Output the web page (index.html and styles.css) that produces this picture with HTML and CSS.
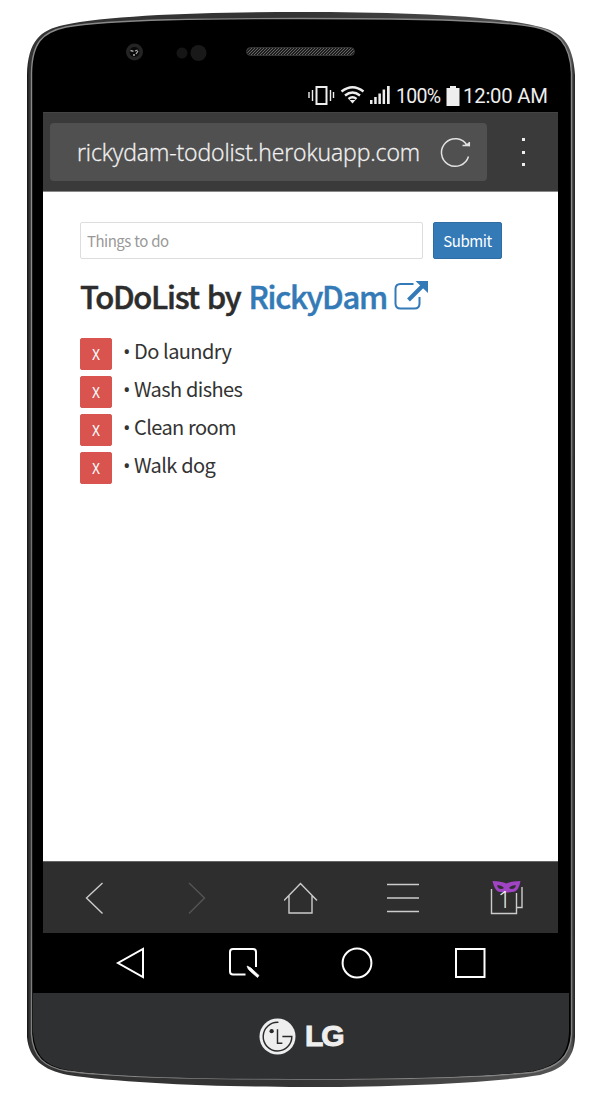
FILE: index.html
```html
<!DOCTYPE html>
<html lang="en">
<head>
<meta charset="utf-8">
<meta name="viewport" content="width=device-width">
<title>ToDoList</title>
<link rel="stylesheet" href="styles.css">
</head>
<body>
<div class="device">
  <svg class="shell" viewBox="0 0 596 1100" aria-hidden="true">
    <defs>
      <linearGradient id="rim" x1="27" x2="575" y1="0" y2="0" gradientUnits="userSpaceOnUse">
        <stop offset="0" stop-color="#111"/><stop offset=".004" stop-color="#333"/><stop offset=".5" stop-color="#343434"/><stop offset=".993" stop-color="#555"/><stop offset="1" stop-color="#222"/>
      </linearGradient>
      <linearGradient id="edge" x1="0" x2="0" y1="15" y2="1085" gradientUnits="userSpaceOnUse">
        <stop offset="0" stop-color="#888"/><stop offset=".25" stop-color="#8c8c8c"/><stop offset=".6" stop-color="#666"/><stop offset="1" stop-color="#858585"/>
      </linearGradient>
      <pattern id="mesh" width="3" height="3" patternUnits="userSpaceOnUse">
        <rect width="3" height="3" fill="#1c1c1c"/><path d="M0 3L3 0" stroke="#777" stroke-width=".8"/>
      </pattern>
      <clipPath id="face"><path d="M33 72C34 42 44 33 67 28C112 20 215 19 300 19C385 19 489 20 534 28C557 33 568 43 569 72V1032C568 1057 556 1066 533 1071C482 1078 380 1079 300 1079C220 1079 119 1078 68 1070C45 1066 35 1056 33 1032Z"/></clipPath>
    </defs>
    <path fill="url(#rim)" d="M27 75C28 41 40 30 64 25C110 15 210 12 301 12C392 12 488 15 536 26C561 31 573 42 575 75V1037C574 1059 563 1069 540 1075C485 1084 380 1087 301 1087C222 1087 120 1083 68 1075C43 1070 29 1059 27 1037Z"/>
    <path fill="#000" stroke="url(#edge)" stroke-width="1.4" d="M31.500 73C32 42 43 32 66 27C112 19 215 18.500 300 18.500C386 18.500 489 19 535 27C558 32 570 43 571.500 73V1034C570 1058 557 1067 534 1072C482 1078 380 1079 300 1079C220 1079 119 1078 67 1071C44 1067 33 1057 31.500 1034Z"/>
    <rect x="30" y="993" width="542" height="92" fill="#2f3032" clip-path="url(#face)"/>
    <circle cx="134.500" cy="52" r="8.500" fill="#242424"/><circle cx="134.500" cy="52" r="5" fill="#090909"/>
    <path d="M130.500 50.500l3 .8M135 51l2.500-1M136 54l2-3M133 55h2" stroke="#aaa" stroke-width="1.300"/>
    <circle cx="182" cy="53" r="5.500" fill="#151515"/><circle cx="198.500" cy="53" r="8" fill="#191919"/>
    <rect x="246.500" y="47.500" width="108" height="8" rx="4" fill="url(#mesh)" stroke="#333"/>
  </svg>
  <main class="screen">
    <header class="status">
      <svg class="status-icons" viewBox="0 0 84 22" aria-hidden="true">
        <path d="M8.500 2h10v17h-10z" fill="none" stroke="#eee" stroke-width="2"/>
        <path d="M1 7v6M4.500 5v11M22.500 5v11M25.500 7v6" stroke="#eee" stroke-width="1.400"/>
        <g fill="none" stroke="#eee" stroke-width="2.400"><path d="M33.500 6.500q11-8.500 22 0M37 10.500q7.500-6 15 0M40.500 14q4-3.500 8 0"/></g>
        <path d="M41.500 15h6l-3 3.500z" fill="#eee"/>
        <path d="M62 19v-4h2.500v4zM66.200 19v-7h2.500v7zM70.400 19V8.500h2.500V19zM74.600 19V4.500h2.500V19zM79 19V1h2.700v18z" fill="#eee"/>
      </svg>
      <span class="percent">100%</span>
      <svg class="battery" viewBox="0 0 14 20" aria-hidden="true"><path d="M4 0h6v2h3.500v18H.5V2H4z" fill="#eee"/></svg>
      <time class="clock">12:00 AM</time>
    </header>
    <nav class="browser">
      <div class="address"><span class="url">rickydam-todolist.herokuapp.com</span>
        <svg class="reload" viewBox="0 0 32 32" fill="none" stroke="#e2e2e2" stroke-width="1.500" aria-hidden="true"><path d="M28.500 20.500A13.800 13.800 0 1 1 27.200 9.500M22.500 9.500h6.800V6"/><path d="M25 8.500l4.500-2v4z" fill="#e2e2e2" stroke="none"/></svg>
      </div>
      <div class="dots"><i></i><i></i><i></i></div>
    </nav>
    <section class="page">
      <form class="entry"><input class="field" type="text" placeholder="Things to do" aria-label="Things to do"><button class="submit" type="button">Submit</button></form>
      <h1 class="title"><span>ToDoList by <a class="author">RickyDam</a></span>
        <svg class="external" viewBox="0 0 34 32" fill="none" aria-hidden="true"><path d="M19.500 4H6.500Q1.500 4 1.500 9v14.500q0 5 5 5h14q5 0 5-5V17" stroke="#337ab7" stroke-width="2"/><path d="M14.500 20L29 5.500" stroke="#337ab7" stroke-width="4"/><path d="M21.500 1H34v12z" fill="#337ab7"/></svg>
      </h1>
      <ul class="todos">
        <li class="todo"><button class="remove">X</button><span class="task"><b class="bullet">•</b> Do laundry</span></li>
        <li class="todo"><button class="remove">X</button><span class="task"><b class="bullet">•</b> Wash dishes</span></li>
        <li class="todo"><button class="remove">X</button><span class="task"><b class="bullet">•</b> Clean room</span></li>
        <li class="todo"><button class="remove">X</button><span class="task"><b class="bullet">•</b> Walk dog</span></li>
      </ul>
    </section>
    <nav class="toolbar">
      <svg viewBox="0 0 34 36"><path d="M25.500 3L9.500 18l16 15.500"/></svg>
      <svg class="disabled" viewBox="0 0 34 36"><path d="M9 3l15.500 15L9 33.500"/></svg>
      <svg viewBox="0 0 34 36"><path d="M0 20.500L16.500 3.500l16.500 17M5 16v17h23V16"/></svg>
      <svg viewBox="0 0 34 36"><path d="M0 4.500h32M0 18h32M0 31.500h32" stroke-width="1.700"/></svg>
      <div class="tabs"><svg viewBox="0 0 34 36"><path d="M1.500 9v24.500h25V13M32 7v20.500h-5"/><path fill="#a044c4" stroke="none" fill-rule="evenodd" d="M2.500 1C8 1 13 2 16.500 3.500C20 2 25 1 30.500 1C29 8 27 12 22.500 12C21 12 20 12.500 16.500 12.500C13 12.500 12 12 10.500 12C6 12 4 7 2.500 1ZM7 5.500C8 9.500 12 9.500 14 8C12 6 10 5 7 5.500ZM26 5.500C25 9.500 21 9.500 19 8C21 6 23 5 26 5.500Z"/></svg><span class="count">1</span></div>
    </nav>
    <nav class="system">
      <svg viewBox="0 0 34 34"><path d="M29 3v28L4 17z"/></svg>
      <svg viewBox="0 0 34 34"><path d="M18.500 28.500H6Q3 28.500 3 25.500V6Q3 3 6 3h20q3 0 3 3v15"/><path d="M20 20q5 2 6 4l6 5.500-1.500 2-7-6Q21 24 20 20Z" fill="#fff" stroke-width=".7"/></svg>
      <svg viewBox="0 0 34 34"><circle cx="17" cy="17" r="14.400"/></svg>
      <svg viewBox="0 0 34 34"><path d="M3 3h28.500v28H3z"/></svg>
    </nav>
  </main>
  <footer class="brand">
    <svg class="emblem" viewBox="0 0 38 38" aria-hidden="true"><circle cx="19" cy="19" r="18.500" fill="#eee"/><g fill="none" stroke="#292a2c" stroke-width="1.500"><path d="M20 4.500A14.700 14.700 0 1 0 33.700 19H24"/><path d="M19 11.500v14.500h5"/></g><circle cx="13" cy="13.500" r="2.200" fill="#292a2c"/></svg>
    <span class="wordmark">LG</span>
  </footer>
</div>
</body>
</html>
```
FILE: styles.css
```css
* { box-sizing: border-box; }
body { margin: 0; background: #fff; overflow: hidden; }
.device { position: relative; width: 596px; height: 1100px; padding: 80px 38px 0 43px; }
.shell { position: absolute; inset: 0; width: 596px; height: 1100px; }
.screen { position: relative; width: 515px; }

.status { display: flex; align-items: center; height: 32px; padding-left: 265px; color: #eee; font-family: Roboto, sans-serif; font-size: 20.300px; line-height: 32px; white-space: nowrap; }
.status-icons { flex: none; width: 84px; height: 22px; margin-top: -1px; }
.percent { width: 50px; margin-left: 4px; padding-top: 1px; font-size: 19.500px; letter-spacing: -.7px; }
.battery { flex: none; width: 14px; height: 20px; margin: -1px 3px 0 0; }
.clock { letter-spacing: -.2px; }

.browser { display: flex; height: 80px; padding: 10px 0 11px 7px; background: #3a3a3a; border-top: 1px solid #444; border-bottom: 1px solid #888; }
.address { display: flex; flex: none; align-items: center; width: 437px; height: 58px; padding-left: 27px; border-radius: 4px; background: #505050; }
.url { width: 363px; color: #f3f3f3; font: 300 23px/32px "Open Sans", sans-serif; letter-spacing: -.1px; -webkit-text-stroke: .3px #f3f3f3; white-space: nowrap; }
.reload { flex: none; width: 32px; height: 32px; }
.dots { display: flex; flex: none; flex-direction: column; align-items: center; justify-content: space-between; width: 71px; height: 28px; margin-top: 15px; }
.dots i { width: 3px; height: 3px; margin-left: 1px; background: #eee; }

.page { height: 669px; padding: 30px 37px 0; background: #fff; color: #333; font-family: "Noto Sans CJK SC", sans-serif; }
.entry { display: flex; gap: 10px; }
.field { width: 343px; height: 37px; padding: 0 6px 1px; border: 1px solid #ddd; border-radius: 2px; background: #fff; font: 15px/22px "Noto Sans CJK SC", sans-serif; letter-spacing: -.5px; word-spacing: .6px; }
.field::placeholder { color: #999; opacity: 1; }
.submit { width: 69px; height: 37px; padding: 0; border: 1px solid #2e6da4; border-radius: 2px; background: #337ab7; color: #fff; font: 15px/22px "Noto Sans CJK SC", sans-serif; letter-spacing: -.4px; }
.title { display: flex; align-items: center; gap: 8px; height: 48px; margin: 14px 0 17px; color: #2d2d2d; font-size: 31px; font-weight: 500; line-height: 48px; letter-spacing: -1.300px; word-spacing: 2.500px; -webkit-text-stroke: .5px currentColor; white-space: nowrap; }
.title > span { width: 306px; margin-top: -3px; }
.author { color: #337ab7; }
.external { width: 34px; height: 32px; margin-top: -3px; }
.todos { display: flex; flex-direction: column; gap: 6px; margin: 0; padding: 0; list-style: none; }
.todo { display: flex; align-items: center; gap: 11px; height: 32px; font-size: 20px; line-height: 30px; letter-spacing: -.6px; word-spacing: .5px; white-space: nowrap; }
.task { display: flex; gap: 4px; margin-top: -4px; }
.bullet { width: 7px; font: 20px/32px "Open Sans", sans-serif; }
.remove { width: 32px; height: 32px; padding: 0; border: 1px solid #d9534f; border-radius: 2px; background: #d9534f; color: #fff; font: 14px/20px "Noto Sans CJK SC", sans-serif; }

.toolbar { display: flex; align-items: center; justify-content: space-between; height: 72px; padding: 0 34px; border-top: 1px solid #666; background: #2e2e2e; }
.toolbar svg { display: block; width: 34px; height: 36px; fill: none; stroke: #ccc; stroke-width: 1.400; }
.toolbar .disabled { stroke: #555; }
.tabs { position: relative; width: 34px; height: 36px; }
.count { position: absolute; left: 0; top: 5px; width: 29px; color: #fff; font: 300 23px/28px "Open Sans", sans-serif; text-align: center; }
.system { display: flex; align-items: center; justify-content: space-between; height: 60px; padding: 0 71px; background: #000; }
.system svg { width: 34px; height: 34px; fill: none; stroke: #fff; stroke-width: 2; }

.brand { position: relative; display: flex; align-items: center; gap: 8px; padding: 24px 0 0 216px; color: #eee; }
.emblem { width: 37px; height: 37px; }
.wordmark { margin-left: 1px; font: bold 30px/38px "Liberation Sans", sans-serif; letter-spacing: -2px; -webkit-text-stroke: 1px #eee; }
```
